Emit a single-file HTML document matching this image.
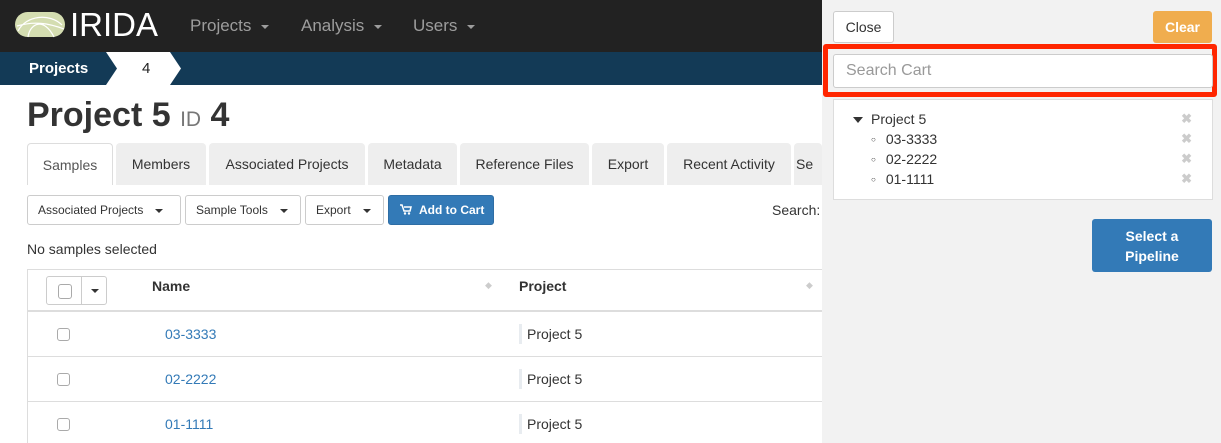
<!DOCTYPE html>
<html><head><style>
*{box-sizing:border-box;margin:0;padding:0}
body{width:1221px;height:443px;overflow:hidden;position:relative;background:#fff;font-family:"Liberation Sans",Arial,sans-serif;font-size:14px;color:#333}
.a{position:absolute;white-space:nowrap}
.nav{left:0;top:0;width:1221px;height:52px;background:#222}
.nav .m{top:16px;color:#9d9d9d;font-size:17px}
.car{display:inline-block;width:0;height:0;border-left:4px solid transparent;border-right:4px solid transparent;border-top:4px solid currentColor;vertical-align:middle;margin-left:10px}
.bc{left:0;top:52px;width:1221px;height:33px;background:#133a56}
.tab{top:143px;height:42px;background:#eee;border-radius:4px 4px 0 0;font-size:14px;line-height:42px;text-align:center;color:#333}
.btn{top:195px;height:30px;border:1px solid #ccc;border-radius:3px;background:#fff;font-size:12px;line-height:28px;padding:0 10px}
.row{left:27px;width:800px;border-top:1px solid #ddd;border-left:1px solid #ddd}
.cb{width:13px;height:13px;border:1px solid #aaa;border-radius:3px;background:#fff}
.x{right:20px;color:#ccc;font-size:13px;font-weight:bold}
.it{left:37px;font-size:14px}
.it span{font-size:8px;margin-right:10px;vertical-align:2px}
</style></head><body>
<div class="a nav">
  <svg class="a" style="left:14px;top:11px" width="52" height="27"><rect x="1" y="1" width="50" height="25" rx="12.5" fill="#d4ddb1"/><path d="M4 20 C12 4 36 2 48 14 M14 26 C16 12 30 6 40 26 M3 15 C20 10 34 12 50 18" stroke="#fff" stroke-width="1.2" fill="none"/></svg>
  <div class="a" style="left:70px;top:6px;color:#fff;font-size:33px">IRIDA</div>
  <div class="a m" style="left:190px">Projects<span class="car"></span></div>
  <div class="a m" style="left:301px">Analysis<span class="car"></span></div>
  <div class="a m" style="left:413px">Users<span class="car"></span></div>
</div>
<div class="a bc">
  <svg class="a" style="left:106px;top:0" width="76" height="33"><polygon points="0,0 64,0 75,16.5 64,33 0,33 11,16.5" fill="#fff"/></svg>
  <div class="a" style="left:29px;top:8px;color:#fff;font-weight:bold;font-size:15px">Projects</div>
  <div class="a" style="left:142px;top:8px;color:#222;font-size:15px">4</div>
</div>
<div class="a" style="left:27px;top:96px;font-size:34px;color:#333;font-weight:bold">Project 5 <span style="font-size:21px;color:#777;font-weight:normal">ID</span> 4</div>
<div class="a tab" style="left:27px;width:86px;background:#fff;border:1px solid #ddd;border-bottom:none;color:#555">Samples</div>
<div class="a tab" style="left:116px;width:90px">Members</div>
<div class="a tab" style="left:209px;width:156px">Associated Projects</div>
<div class="a tab" style="left:368px;width:89px">Metadata</div>
<div class="a tab" style="left:460px;width:129px">Reference Files</div>
<div class="a tab" style="left:592px;width:72px">Export</div>
<div class="a tab" style="left:667px;width:124px">Recent Activity</div>
<div class="a tab" style="left:794px;width:28px;text-align:left;padding-left:2px;overflow:hidden">Se</div>
<div class="a btn" style="left:27px;width:154px">Associated Projects<span class="car" style="margin-left:12px"></span></div>
<div class="a btn" style="left:185px;width:116px">Sample Tools<span class="car" style="margin-left:12px"></span></div>
<div class="a btn" style="left:305px;width:79px">Export<span class="car" style="margin-left:12px"></span></div>
<div class="a btn" style="left:388px;width:106px;background:#337ab7;border-color:#2e6da4;color:#fff;font-weight:bold;padding-left:11px"><svg width="12" height="11" style="vertical-align:-1px;margin-right:7px"><path d="M0 1h2l2 6h6l1-4H4" stroke="#fff" stroke-width="1.5" fill="none"/><circle cx="5" cy="9.5" r="1.2" fill="#fff"/><circle cx="9" cy="9.5" r="1.2" fill="#fff"/></svg>Add to Cart</div>
<div class="a" style="left:772px;top:202px;font-size:14px">Search:</div>
<div class="a" style="left:27px;top:241px;font-size:14px">No samples selected</div>
<div class="a row" style="top:269px;height:43px;border-bottom:2px solid #ddd"></div>
<div class="a" style="left:46px;top:276px;width:61px;height:29px;border:1px solid #ccc;border-radius:3px"><div class="a" style="left:34px;top:0;height:27px;border-left:1px solid #ccc"></div><div class="a cb" style="left:11px;top:7px;width:14px;height:15px"></div><span class="a car" style="left:34px;top:12px;color:#333"></span></div>
<div class="a" style="left:152px;top:278px;font-weight:bold">Name</div>
<div class="a" style="left:519px;top:278px;font-weight:bold">Project</div>
<div class="a" style="left:485px;top:280px;color:#ccc;font-size:9px">&#9670;</div>
<div class="a" style="left:806px;top:280px;color:#ccc;font-size:9px">&#9670;</div>
<div class="a row" style="top:356px;height:1px"></div>
<div class="a row" style="top:401px;height:1px"></div>
<div class="a" style="left:27px;top:311px;height:132px;border-left:1px solid #ddd"></div>
<div class="a cb" style="left:57px;top:328px"></div><div class="a" style="left:165px;top:326px;color:#337ab7">03-3333</div><div class="a" style="left:519px;top:324px;width:3px;height:20px;background:#e8ecf0"></div><div class="a" style="left:527px;top:326px">Project 5</div>
<div class="a cb" style="left:57px;top:373px"></div><div class="a" style="left:165px;top:371px;color:#337ab7">02-2222</div><div class="a" style="left:519px;top:369px;width:3px;height:20px;background:#e8ecf0"></div><div class="a" style="left:527px;top:371px">Project 5</div>
<div class="a cb" style="left:57px;top:418px"></div><div class="a" style="left:165px;top:416px;color:#337ab7">01-1111</div><div class="a" style="left:519px;top:414px;width:3px;height:20px;background:#e8ecf0"></div><div class="a" style="left:527px;top:416px">Project 5</div>

<div class="a" style="left:822px;top:0;width:399px;height:443px;background:#f2f2f2">
  <div class="a" style="left:11px;top:11px;width:61px;height:32px;background:#fff;border:1px solid #ccc;border-radius:3px;text-align:center;line-height:30px;font-size:14px">Close</div>
  <div class="a" style="left:331px;top:11px;width:59px;height:32px;background:#f0ad4e;border-radius:3px;text-align:center;line-height:32px;font-size:14px;color:#fff;font-weight:bold">Clear</div>
  <div class="a" style="left:1px;top:44px;width:394px;height:53px;border:5px solid #ff2600;border-radius:3px"></div>
  <div class="a" style="left:11px;top:54px;width:380px;height:34px;background:#fff;border:1px solid #ccc;border-radius:3px;padding-left:12px;line-height:32px;font-size:16px;color:#999">Search Cart</div>
  <div class="a" style="left:11px;top:99px;width:380px;height:101px;background:#fff;border:1px solid #ddd">
    <div class="a" style="left:19px;top:17px;width:0;height:0;border-left:5px solid transparent;border-right:5px solid transparent;border-top:6px solid #333"></div>
    <div class="a" style="left:37px;top:11px">Project 5</div>
    <div class="a it" style="top:31px"><span>&#9675;</span>03-3333</div>
    <div class="a it" style="top:51px"><span>&#9675;</span>02-2222</div>
    <div class="a it" style="top:71px"><span>&#9675;</span>01-1111</div>
    <div class="a x" style="top:11px">✖</div><div class="a x" style="top:31px">✖</div><div class="a x" style="top:51px">✖</div><div class="a x" style="top:71px">✖</div>
  </div>
  <div class="a" style="left:270px;top:219px;width:120px;height:53px;background:#337ab7;border-radius:3px;color:#fff;font-weight:bold;text-align:center;font-size:14px;line-height:20px;padding-top:7px">Select a<br>Pipeline</div>
</div>
</body></html>
